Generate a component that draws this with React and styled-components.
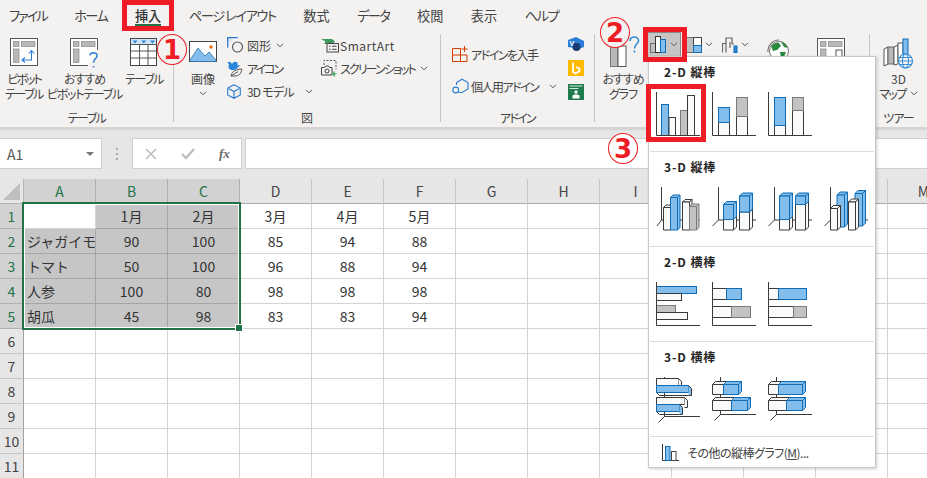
import React from "react";
import styled, { createGlobalStyle } from "styled-components";

const JP = `"Noto Sans CJK JP", "Noto Sans", sans-serif`;
const RED = "#ee1c25";
const BLUE = "#83bdeb";
const BLUE_LINE = "#0f6cb5";
const WHITE = "#fafafa";
const DARK = "#3a3a3a";
const GREY = "#c4c3c1";
const GREY_LINE = "#7a7a7a";

const Global = createGlobalStyle`
  html, body { margin: 0; padding: 0; background: #fff; }
  * { box-sizing: border-box; }
`;

const Page = styled.div`
  position: relative;
  width: 927px;
  height: 478px;
  overflow: hidden;
  background: #fff;
  font-family: ${JP};
  font-feature-settings: "palt";
  color: #444;
`;

/* ---------- tabs ---------- */
const TabBar = styled.div`
  display: flex;
  gap: 27.5px;
  height: 33px;
  padding: 0 0 0 9px;
  background: #f3f2f1;
`;
const Tab = styled.div`
  position: relative;
  height: 33px;
  line-height: 31px;
  font-size: 13.2px;
  letter-spacing: ${(p) => p.$ls || 0}px;
  white-space: nowrap;
  color: #444;
  ${(p) => p.$active && `
    font-weight: 500;
    color: #333;
    &::after {
      content: "";
      position: absolute;
      left: 0; right: 0; top: 24px;
      height: 2px;
      background: #217346;
    }
  `}
`;

/* ---------- ribbon ---------- */
const Ribbon = styled.div`
  display: flex;
  height: 97px;
  background: #f3f2f1;
  border-bottom: 3px solid #d6d4d2;
  font-size: 12px;
  line-height: 15px;
  letter-spacing: -1.5px;
`;
const Group = styled.div`
  display: flex;
  flex-direction: column;
  flex: none;
  width: ${(p) => p.$w}px;
  height: 94px;
`;
const GroupBody = styled.div`
  display: flex;
  flex: 1;
  min-height: 0;
`;
const GroupLabel = styled.div`
  height: 17px;
  line-height: 16px;
  padding-bottom: 1px;
  text-align: center;
  white-space: nowrap;
  ${(p) => p.$ls !== undefined && `letter-spacing: ${p.$ls}px;`}
`;
const Sep = styled.div`
  flex: none;
  width: 1px;
  height: 88px;
  margin-top: 1px;
  background: #c8c6c4;
`;
const Large = styled.div`
  display: flex;
  flex-direction: column;
  align-items: center;
  flex: none;
  width: ${(p) => p.$w}px;
  margin-left: ${(p) => p.$ml || 0}px;
  white-space: nowrap;
`;
const LargeIcon = styled.div`
  display: flex;
  align-items: flex-start;
  justify-content: center;
  flex: none;
  height: 38px;
  padding-top: ${(p) => p.$pt ?? 5}px;
`;
const Line = styled.div`
  height: 15px;
  display: flex;
  align-items: center;
  gap: 4px;
  white-space: nowrap;
  ${(p) => p.$ls !== undefined && `letter-spacing: ${p.$ls}px;`}
`;
const SmallCol = styled.div`
  display: flex;
  flex-direction: column;
  flex: none;
  padding-top: ${(p) => p.$pt ?? 1}px;
  margin-left: ${(p) => p.$ml || 0}px;
  width: ${(p) => p.$w}px;
`;
const SmallRow = styled.div`
  display: flex;
  align-items: center;
  height: ${(p) => p.$h || 23}px;
  white-space: nowrap;
  ${(p) => p.$ls !== undefined && `letter-spacing: ${p.$ls}px;`}
`;
const SmallIcon = styled.div`
  display: flex;
  flex: none;
  width: ${(p) => p.$w || 20}px;
`;
const Chev = styled.svg`
  flex: none;
  margin-left: ${(p) => p.$ml ?? 5}px;
`;
const IconStack = styled.div`
  display: flex;
  flex-direction: column;
  flex: none;
  gap: 8px;
  padding-top: 4px;
  margin-left: ${(p) => p.$ml || 0}px;
`;
const SplitBtn = styled.div`
  display: flex;
  align-items: center;
  flex: none;
  height: 25px;
  margin-top: -1px;
  margin-left: ${(p) => p.$ml || 0}px;
  padding-left: ${(p) => p.$pl || 0}px;
  width: ${(p) => p.$w}px;
  ${(p) => p.$on && `background: #c8c6c4; border: 1px solid #8a8886;`}
`;
const Plain = styled.div`
  flex: none;
  margin-left: ${(p) => p.$ml || 0}px;
  padding-top: 5px;
`;

/* ---------- formula bar ---------- */
const FormulaBar = styled.div`
  display: flex;
  align-items: flex-start;
  height: 49px;
  padding-top: 8px;
  background: #e6e6e6;
`;
const NameBox = styled.div`
  display: flex;
  align-items: center;
  justify-content: space-between;
  flex: none;
  width: 102px;
  height: 31px;
  padding: 0 7px;
  background: #fff;
  border: 1px solid #d0d0d0;
  border-left: 0;
  font-size: 14px;
  color: #555;
`;
const Caret = styled.div`
  width: 0;
  height: 0;
  border-left: 4px solid transparent;
  border-right: 4px solid transparent;
  border-top: 4px solid #777;
`;
const Dots = styled.div`
  flex: none;
  display: flex;
  flex-direction: column;
  gap: 3px;
  width: 30px;
  height: 31px;
  align-items: center;
  justify-content: center;
  & > i { display: block; width: 2px; height: 2px; background: #aaa; }
`;
const FxBox = styled.div`
  display: flex;
  align-items: center;
  flex: none;
  width: 110px;
  height: 31px;
  padding-left: 12px;
  gap: 24px;
  background: #fff;
  border: 1px solid #d0d0d0;
`;
const Fx = styled.span`
  font: italic bold 13px "Liberation Serif", serif;
  color: #666;
`;
const FormulaInput = styled.div`
  flex: 1;
  height: 31px;
  margin-left: 3px;
  background: #fff;
  border: 1px solid #d0d0d0;
  border-right: 0;
`;

/* ---------- sheet ---------- */
const SheetWrap = styled.div`
  position: relative;
`;
const Sheet = styled.div`
  display: grid;
  grid-template-columns: 24px repeat(13, 72px);
  grid-auto-rows: 25px;
  font-size: 14px;
  color: #333;
  font-feature-settings: normal;
`;
const Corner = styled.div`
  position: relative;
  background: #e6e6e6;
  border-right: 1px solid #b5b5b5;
  border-bottom: 1px solid #b5b5b5;
  &::after {
    content: "";
    position: absolute;
    right: 3px;
    bottom: 3px;
    width: 0; height: 0;
    border-left: 17px solid transparent;
    border-bottom: 17px solid #bfbfbf;
  }
`;
const ColHead = styled.div`
  display: flex;
  align-items: center;
  justify-content: center;
  background: ${(p) => (p.$sel ? "#d2d2d2" : "#e6e6e6")};
  color: ${(p) => (p.$sel ? "#217346" : "#444")};
  border-right: 1px solid ${(p) => (p.$sel ? "#b0b0b0" : "#c6c6c6")};
  border-bottom: 1px solid #ababab;
`;
const RowHead = styled.div`
  display: flex;
  align-items: center;
  justify-content: center;
  background: ${(p) => (p.$sel ? "#d2d2d2" : "#e6e6e6")};
  color: ${(p) => (p.$sel ? "#217346" : "#444")};
  border-right: 1px solid #9f9f9f;
  border-bottom: 1px solid ${(p) => (p.$sel ? "#b0b0b0" : "#c6c6c6")};
`;
const Cell = styled.div`
  display: flex;
  align-items: center;
  justify-content: ${(p) => (p.$left ? "flex-start" : "center")};
  overflow: hidden;
  white-space: nowrap;
  padding-left: ${(p) => (p.$left ? 3 : 0)}px;
  background: ${(p) => (p.$sel ? "#c6c6c6" : "#fff")};
  border-right: 1px solid ${(p) => (p.$sel ? "#a6a6a6" : "#d4d4d4")};
  border-bottom: 1px solid ${(p) => (p.$sel ? "#a6a6a6" : "#d4d4d4")};
`;
const Selection = styled.div`
  position: absolute;
  left: 22px;
  top: 23px;
  width: 219px;
  height: 128px;
  border: 2px solid #217346;
  box-shadow: inset 0 0 0 1px #fff;
  pointer-events: none;
`;
const Handle = styled.div`
  position: absolute;
  right: -3px;
  bottom: -3px;
  width: 6px;
  height: 6px;
  background: #217346;
  outline: 1px solid #fff;
`;

/* ---------- chart menu ---------- */
const Menu = styled.div`
  position: absolute;
  left: 648px;
  top: 56px;
  width: 228px;
  height: 412px;
  background: #fff;
  border: 1px solid #c8c8c8;
  box-shadow: 1px 1px 3px rgba(0, 0, 0, 0.2);
`;
const Section = styled.div`
  height: 95px;
  margin: 0 1px;
  padding: 6px 0 0 6px;
  border-bottom: 1px solid #dcdcdc;
`;
const SectionTitle = styled.div`
  height: 18px;
  line-height: 18px;
  padding-left: 8px;
  margin-bottom: 9px;
  font-size: 12px;
  font-weight: 700;
  letter-spacing: 0.9px;
  color: #262626;
`;
const Thumbs = styled.div`
  display: flex;
  gap: 12px;
`;
const MenuFooter = styled.div`
  display: flex;
  align-items: center;
  height: 30px;
  padding-left: 13px;
  font-size: 12px;
  letter-spacing: -0.5px;
  color: #444;
  gap: 8px;
`;

/* ---------- annotations ---------- */
const RedFrame = styled.div`
  position: absolute;
  left: ${(p) => p.$x}px;
  top: ${(p) => p.$y}px;
  width: ${(p) => p.$w}px;
  height: ${(p) => p.$h}px;
  border: 5px solid ${RED};
  pointer-events: none;
`;
const Badge = styled.div`
  position: absolute;
  left: ${(p) => p.$x - 15}px;
  top: ${(p) => p.$y - 15}px;
  width: 30px;
  height: 31px;
  display: flex;
  align-items: center;
  justify-content: center;
  border: 1px solid ${RED};
  border-radius: 50%;
  background: ${(p) => p.$bg};
  color: ${RED};
  font: 700 26px/1 "DejaVu Sans", sans-serif;
`;

/* ---------- drawings ---------- */
const Chevron = ({ ml }) => (
  <Chev $ml={ml} width="8" height="5" viewBox="0 0 8 5">
    <path d="M1 .8 4 3.8 7 .8" fill="none" stroke="#555" strokeWidth="1" />
  </Chev>
);

const Rect = ({ x, y, w, h, kind }) => {
  const k = { b: [BLUE, BLUE_LINE], w: [WHITE, DARK], g: [GREY, GREY_LINE], s: [WHITE, GREY_LINE] }[kind];
  return <rect x={x} y={y} width={w} height={h} fill={k[0]} stroke={k[1]} strokeWidth="1" />;
};
const Box3 = ({ x, y, w, h, kind, d = 3 }) => {
  const k = { b: [BLUE, BLUE_LINE], w: [WHITE, DARK], g: [GREY, GREY_LINE] }[kind];
  return (
    <g fill={k[0]} stroke={k[1]} strokeWidth="1" strokeLinejoin="round">
      <path d={`M${x} ${y} l${d} ${-d} h${w} l${-d} ${d} z`} />
      <path d={`M${x + w} ${y} l${d} ${-d} v${h} l${-d} ${d} z`} />
      <rect x={x} y={y} width={w} height={h} />
    </g>
  );
};
const Axis2 = () => <path d="M.5 2V45.5H44" fill="none" stroke={DARK} strokeWidth="1" />;
const Axis3 = ({ x = 5.5, floor = 35, tail = 1 }) => (
  <path d={`M${x} 2V${floor}H44M${x} ${floor}L${tail} ${floor + 6}`} fill="none" stroke={DARK} strokeWidth="1" />
);
const AxisH3 = ({ x = 8.5, floor = 39.5, top = 2 }) => (
  <path d={`M${x} ${top}V${floor}H44M${x} ${floor}L${x - 6} ${floor + 6}`} fill="none" stroke={DARK} strokeWidth="1" />
);
const Thumb = ({ children }) => (
  <svg width="44" height="48" viewBox="0 0 44 48">{children}</svg>
);

const col2 = [
  <Thumb key="a"><Rect x={5.5} y={14.5} w={7} h={31} kind="b" /><Rect x={13} y={27.5} w={6.5} h={18} kind="w" /><Rect x={24.5} y={20.5} w={7} h={25} kind="g" /><Rect x={31.5} y={5.5} w={7} h={40} kind="w" /><Axis2 /></Thumb>,
  <Thumb key="b"><Rect x={6.5} y={32.5} w={11} h={13} kind="w" /><Rect x={6.5} y={17.5} w={11} h={15} kind="b" /><Rect x={24.5} y={26.5} w={11} h={19} kind="w" /><Rect x={24.5} y={7.5} w={11} h={19} kind="g" /><Axis2 /></Thumb>,
  <Thumb key="c"><Rect x={6.5} y={35.5} w={11} h={10} kind="w" /><Rect x={6.5} y={7.5} w={11} h={28} kind="b" /><Rect x={24.5} y={20.5} w={11} h={25} kind="w" /><Rect x={24.5} y={7.5} w={11} h={13} kind="g" /><Axis2 /></Thumb>,
];
const col3 = [
  <Thumb key="a"><Axis3 /><Box3 x={7.5} y={22.5} w={7} h={22.5} kind="w" d={2.5} /><Box3 x={14.5} y={12.5} w={7} h={32.5} kind="b" d={2.5} /><Box3 x={26.5} y={17} w={7} h={28} kind="w" d={2.5} /><Box3 x={33.5} y={21.5} w={7} h={23.5} kind="g" d={2.5} /></Thumb>,
  <Thumb key="b"><Axis3 x={6.5} tail={.5} /><Box3 x={11.5} y={34.5} w={10} h={10.5} kind="w" /><Box3 x={11.5} y={19.5} w={10} h={15} kind="b" /><Box3 x={27.5} y={27} w={10} h={18} kind="w" /><Box3 x={27.5} y={11} w={10} h={16} kind="b" /></Thumb>,
  <Thumb key="c"><Axis3 x={6.5} tail={.5} /><Box3 x={11.5} y={34.5} w={10} h={10.5} kind="w" /><Box3 x={11.5} y={11} w={10} h={23.5} kind="b" /><Box3 x={27.5} y={19.5} w={10} h={25.5} kind="w" /><Box3 x={27.5} y={11} w={10} h={8.5} kind="b" /></Thumb>,
  <Thumb key="d"><Axis3 x={6.5} tail={.5} /><Box3 x={13} y={10} w={7.5} h={32} kind="b" /><Box3 x={31} y={8.5} w={7.5} h={32.5} kind="b" /><Box3 x={6.5} y={23.5} w={7} h={21.5} kind="w" /><Box3 x={24.5} y={17} w={7} h={28} kind="w" /></Thumb>,
];
const bar2 = [
  <Thumb key="a"><Rect x={.5} y={6.5} w={40} h={7} kind="b" /><Rect x={.5} y={13.5} w={25} h={7} kind="w" /><Rect x={.5} y={25.5} w={19} h={7} kind="g" /><Rect x={.5} y={32.5} w={31} h={7} kind="w" /><Axis2 /></Thumb>,
  <Thumb key="b"><Rect x={.5} y={8.5} w={14} h={11} kind="w" /><Rect x={14.5} y={8.5} w={15} h={11} kind="b" /><Rect x={.5} y={26.5} w={19} h={11} kind="w" /><Rect x={19.5} y={26.5} w={19} h={11} kind="g" /><Axis2 /></Thumb>,
  <Thumb key="c"><Rect x={.5} y={8.5} w={10} h={11} kind="w" /><Rect x={10.5} y={8.5} w={28} h={11} kind="b" /><Rect x={.5} y={26.5} w={25} h={11} kind="w" /><Rect x={25.5} y={26.5} w={13} h={11} kind="g" /><Axis2 /></Thumb>,
];
const bar3 = [
  <Thumb key="a"><AxisH3 top={2} floor={41.5} /><Box3 x={.5} y={3.5} w={22} h={7} kind="w" d={0} /><path d="M22.5 3.5l3 3v7h-3" fill={WHITE} stroke={DARK} /><Box3 x={.5} y={10.5} w={32} h={7} kind="b" d={0} /><path d="M32.5 10.5l3 3v7h-3" fill={BLUE} stroke={DARK} /><path d="M.5 17.5l3 3h29" fill="none" stroke={DARK} /><Box3 x={.5} y={22.5} w={28} h={7} kind="w" d={0} /><path d="M28.5 22.5l3 3v7h-3" fill={WHITE} stroke={DARK} /><Box3 x={.5} y={29.5} w={23} h={7} kind="b" d={0} /><path d="M23.5 29.5l3 3v7h-3" fill={BLUE} stroke={DARK} /><path d="M.5 36.5l3 3h20" fill="none" stroke={DARK} /></Thumb>,
  <Thumb key="b"><AxisH3 top={2} /><Box3 x={.5} y={9.5} w={11} h={10} kind="w" /><Box3 x={11.5} y={9.5} w={15} h={10} kind="b" /><Box3 x={.5} y={25.5} w={19} h={10} kind="w" /><Box3 x={19.5} y={25.5} w={16} h={10} kind="b" /></Thumb>,
  <Thumb key="c"><AxisH3 top={2} /><Box3 x={.5} y={9.5} w={10} h={10} kind="w" /><Box3 x={10.5} y={9.5} w={24} h={10} kind="b" /><Box3 x={.5} y={25.5} w={18} h={10} kind="w" /><Box3 x={18.5} y={25.5} w={16} h={10} kind="b" /></Thumb>,
];

const PivotIcon = () => (
  <svg width="28" height="28" viewBox="0 0 28 28">
    <rect x=".5" y=".5" width="27" height="27" fill="#fff" stroke="#555" />
    <rect x="3.5" y="3.5" width="5.5" height="5" fill="#b9b8b6" stroke="#7a7a7a" strokeWidth=".6" />
    <rect x="11.5" y="3.5" width="13.5" height="5" fill="#b9b8b6" stroke="#7a7a7a" strokeWidth=".6" />
    <rect x="3.5" y="11" width="5.5" height="13.5" fill="#b9b8b6" stroke="#7a7a7a" strokeWidth=".6" />
    <path d="M13 22h8.5v-9M18.8 15.5l2.7-3 2.7 3M15 19.5l-3 2.5 3 2.5" fill="none" stroke="#2b7cd3" strokeWidth="1.1" />
  </svg>
);
const RecoPivotIcon = () => (
  <svg width="30" height="30" viewBox="0 0 30 30">
    <path d="M18 27.5H.5V.5h27V12" fill="#fff" stroke="#555" />
    <rect x="3.5" y="3.5" width="5.5" height="5" fill="#b9b8b6" stroke="#7a7a7a" strokeWidth=".6" />
    <rect x="11.5" y="3.5" width="13.5" height="5" fill="#b9b8b6" stroke="#7a7a7a" strokeWidth=".6" />
    <rect x="3.5" y="11" width="5.5" height="13.5" fill="#b9b8b6" stroke="#7a7a7a" strokeWidth=".6" />
    <path d="M20 17.5c0-3.5 7-4 7 .3 0 3-3.5 3-3.5 7M23.5 28v1.6" fill="none" stroke="#2b7cd3" strokeWidth="1.5" />
  </svg>
);
const TableIcon = () => (
  <svg width="28" height="28" viewBox="0 0 28 28">
    <rect x=".5" y=".5" width="26" height="27" fill="#fff" stroke="#444" />
    <rect x="1" y="1" width="25" height="5.5" fill="#cfe4f6" />
    <path d="M.5 6.5h26M.5 13h26M.5 20h26M9.5 6.5v21M18 6.5v21" stroke="#555" fill="none" />
    <path d="M2.5 2.5h5l-2.5 3zM11.3 2.5h5l-2.5 3zM20 2.5h5l-2.5 3z" fill="#2b88d8" />
  </svg>
);
const PictureIcon = () => (
  <svg width="28" height="21" viewBox="0 0 28 21">
    <rect x=".5" y=".5" width="27" height="20" fill="#fff" stroke="#444" />
    <path d="M1 19 9 7l7 8 4-4 7 8v1.5H1z" fill={BLUE} stroke="#2f6ea3" strokeWidth=".8" />
    <circle cx="22" cy="6" r="1.8" fill="#e8700f" />
  </svg>
);
const ShapesIcon = () => (
  <svg width="17" height="17" viewBox="0 0 17 17">
    <path d="M.7 10.5V.7h10" fill="none" stroke="#2b7cd3" strokeWidth="1.3" />
    <rect x=".7" y=".7" width="4" height="4" fill="#2b7cd3" opacity=".12" />
    <circle cx="10.5" cy="10" r="5" fill="#f3f2f1" stroke="#555" strokeWidth="1.1" />
  </svg>
);
const BirdIcon = () => (
  <svg width="16" height="16" viewBox="0 0 16 16">
    <path d="M.5 1h3l1.5 2C6 1 8 .3 9.5 1c1.2.6 1.5 2 .8 3.3H13L10 7.5C8 9.2 5 9.5 3 8.5 1.5 7.5 1 5.5 2 3.8z" fill="#2b88d8" />
    <path d="M4 15c.5-3.5 3-6.5 10.8-7-.3 4.5-3 7-7 7-1 0-2.3-.2-3.8 0zM4.2 15 11 10.5" fill="#f3f2f1" stroke="#555" strokeWidth="1" />
  </svg>
);
const CubeIcon = () => (
  <svg width="14" height="15" viewBox="0 0 14 15">
    <path d="M7 .7 13.3 4v7L7 14.3.7 11V4zM.7 4 7 7.5 13.3 4M7 7.5v6.8" fill="none" stroke="#2b7cd3" strokeWidth="1.1" />
  </svg>
);
const SmartArtIcon = () => (
  <svg width="18" height="14" viewBox="0 0 18 14">
    <path d="M0 0h11l3 2.5-3 2.5H3L4.5 2.5z" fill="#3f9a5d" />
    <rect x="6" y="4.5" width="11.5" height="8.5" fill="#f3f2f1" stroke="#444" />
    <path d="M8 7.2h1.5M11 7.2h4.5M8 10.3h1.5M11 10.3h4.5" stroke="#444" />
  </svg>
);
const ScreenshotIcon = () => (
  <svg width="16" height="17" viewBox="0 0 16 17">
    <path d="M3 5V.5h12v9" fill="none" stroke="#555" strokeDasharray="2 1.5" />
    <path d="M.5 7.5h3l1-1.5h3l1 1.5h2.5V15H.5z" fill="#f3f2f1" stroke="#444" />
    <circle cx="6" cy="11" r="2" fill="none" stroke="#444" />
    <path d="M13 11.5v5M10.5 14h5" stroke="#2f9a4f" strokeWidth="1.2" />
  </svg>
);
const GetAddinIcon = () => (
  <svg width="16" height="16" viewBox="0 0 16 16">
    <path d="M.5 2.5h8v13H.5zM.5 9H15v6.5H8.5M8.5 9V2.5" fill="none" stroke="#d83b01" strokeWidth="1" />
    <path d="M12.5 0v6M9.5 3h6" stroke="#d83b01" strokeWidth="1" />
  </svg>
);
const MyAddinIcon = () => (
  <svg width="17" height="17" viewBox="0 0 17 17">
    <path d="M4.5 7V4.5L10 1.2l6 3.3V11L10 14.5H6.5" fill="none" stroke="#2b7cd3" strokeWidth="1.1" />
    <circle cx="3.7" cy="12" r="2.9" fill="#f3f2f1" stroke="#2b7cd3" strokeWidth="1.1" />
  </svg>
);
const VisioIcon = () => (
  <svg width="16" height="15" viewBox="0 0 16 15">
    <path d="M8 0l8 4v6l-5 2-3-1-8-1V3z" fill="#2b7cd3" />
    <circle cx="8.5" cy="10" r="4" fill="#173a73" />
    <text x="1.5" y="8.5" fontSize="7" fontWeight="700" fill="#fff" fontFamily="Liberation Sans, sans-serif">V</text>
  </svg>
);
const BingIcon = () => (
  <svg width="16" height="16" viewBox="0 0 16 16">
    <rect width="16" height="16" fill="#ffb900" />
    <path d="M5 2.5V12l2.5 1.5 4-2.5V8.5L8 7" fill="none" stroke="#fff" strokeWidth="1.8" />
  </svg>
);
const PeopleIcon = () => (
  <svg width="16" height="16" viewBox="0 0 16 16">
    <rect width="16" height="16" fill="#1f7a4d" />
    <path d="M1.5 2h13M1.5 4.5h9" stroke="#cfe8d8" strokeWidth="1.2" />
    <circle cx="8" cy="8" r="1.7" fill="#fff" />
    <path d="M4.5 14.5v-3l2-1h3l2 1v3z" fill="#fff" />
  </svg>
);
const RecoChartIcon = () => (
  <svg width="34" height="32" viewBox="-4 0 34 32">
    <rect x=".5" y="3.5" width="7.5" height="28" fill="#b9b8b6" stroke="#7a7a7a" />
    <rect x="8" y="11" width="8" height="20.5" fill="#fff" stroke="#555" />
    <path d="M20 6c0-5 8.5-5.5 8.5-.5 0 3.5-4 3.5-4 8M24.5 15.5v2" fill="none" stroke="#2b88d8" strokeWidth="1.5" />
  </svg>
);
const ColumnIcon = () => (
  <svg width="17" height="17" viewBox="0 0 17 17">
    <rect x=".5" y="7.5" width="5" height="9" fill="#c0bfbd" stroke="#6f6f6f" />
    <rect x="5.5" y=".5" width="5" height="16" fill="#fff" stroke="#333" />
    <rect x="10.5" y="3.5" width="5" height="13" fill={BLUE} stroke={BLUE_LINE} />
  </svg>
);
const HierarchyIcon = () => (
  <svg width="16" height="16" viewBox="0 0 16 16">
    <rect x=".5" y=".5" width="7" height="15" fill="#c0bfbd" stroke="#6f6f6f" />
    <rect x="7.5" y=".5" width="8" height="8" fill="#fff" stroke="#444" />
    <rect x="7.5" y="8.5" width="8" height="7" fill={BLUE} stroke={BLUE_LINE} />
  </svg>
);
const WaterfallIcon = () => (
  <svg width="16" height="16" viewBox="0 0 16 16">
    <path d="M.5 15.5v-9H4V1h6v6h2" fill="none" stroke="#666" strokeWidth="1.2" />
    <path d="M4 15.5v-9M8 5v6" fill="none" stroke="#666" strokeWidth="1.2" />
    <rect x="12" y="9" width="3" height="6.5" fill="#2b88d8" stroke={BLUE_LINE} />
  </svg>
);
const GlobeIcon = () => (
  <svg width="24" height="26" viewBox="0 0 24 26">
    <path d="M2 14a11 11 0 0 1 11-12" fill="none" stroke="#777" strokeWidth="1.2" />
    <circle cx="13" cy="13" r="9.5" fill="#fff" stroke="#777" />
    <path d="M5 8c3-3 6-4 8-3l2 3-4 4-4 1zM15 4c3 0 6 3 6.5 6L18 9zM14 14h6l-2 5-3 1z" fill="#2c8a3f" />
  </svg>
);
const PivotChartIcon = () => (
  <svg width="29" height="28" viewBox="0 0 29 28">
    <rect x=".5" y=".5" width="27" height="27" fill="#fff" stroke="#555" />
    <rect x="3.5" y="3.5" width="5.5" height="5" fill="#b9b8b6" stroke="#7a7a7a" strokeWidth=".6" />
    <rect x="11.5" y="3.5" width="13.5" height="5" fill="#b9b8b6" stroke="#7a7a7a" strokeWidth=".6" />
    <rect x="3.5" y="11" width="5.5" height="13" fill="#b9b8b6" stroke="#7a7a7a" strokeWidth=".6" />
    <rect x="19" y="12" width="6" height="10" fill="#fff" stroke="#555" />
  </svg>
);
const MapIcon = () => (
  <svg width="31" height="31" viewBox="0 0 31 31">
    <path d="M1 11l4-2v17l-4 2z" fill="#fff" stroke="#555" />
    <rect x="5" y="9" width="6" height="17" fill="#b9b8b6" stroke="#666" />
    <path d="M11 9l4-2v19l-4 1z" fill="#fff" stroke="#555" />
    <rect x="15" y="5" width="5" height="18" fill="#fff" stroke="#555" />
    <rect x="20" y="1" width="5" height="18" fill={BLUE} stroke={BLUE_LINE} />
    <circle cx="22.5" cy="23" r="7" fill="#f3f2f1" stroke="#2b88d8" strokeWidth="1.1" />
    <ellipse cx="22.5" cy="23" rx="3" ry="7" fill="none" stroke="#2b88d8" />
    <path d="M15.5 23h14M16.5 19.5h12M16.5 26.5h12" stroke="#2b88d8" strokeWidth=".9" />
  </svg>
);
const MoreIcon = () => (
  <svg width="17" height="17" viewBox="0 0 17 17">
    <path d="M.5 0v16.5H17" fill="none" stroke="#333" />
    <rect x="3.5" y="2.5" width="4.5" height="14" fill={BLUE} stroke={BLUE_LINE} />
    <rect x="9.5" y="7.5" width="4.5" height="9" fill="#fff" stroke="#444" />
  </svg>
);
const CrossIcon = () => (
  <svg width="12" height="12" viewBox="0 0 12 12"><path d="M1 1l10 10M11 1 1 11" stroke="#bdbdbd" strokeWidth="1.5" fill="none" /></svg>
);
const CheckIcon = () => (
  <svg width="14" height="12" viewBox="0 0 14 12"><path d="M1 6l4 4 8-9" stroke="#bdbdbd" strokeWidth="2.3" fill="none" /></svg>
);

/* ---------- data ---------- */
const COLS = ["A", "B", "C", "D", "E", "F", "G", "H", "I", "J", "K", "L", "M"];
const DATA = [
  ["", "1月", "2月", "3月", "4月", "5月"],
  ["ジャガイモ", "90", "100", "85", "94", "88"],
  ["トマト", "50", "100", "96", "88", "94"],
  ["人参", "100", "80", "98", "98", "98"],
  ["胡瓜", "45", "98", "83", "83", "94"],
];
const ROWS = Array.from({ length: 11 }, (_, i) => i);

export default function App() {
  return (
    <Page>
      <Global />
      <TabBar>
        <Tab $ls={-2}>ファイル</Tab>
        <Tab $ls={-1.5}>ホーム</Tab>
        <Tab $active>挿入</Tab>
        <Tab $ls={-1.4}>ページ レイアウト</Tab>
        <Tab>数式</Tab>
        <Tab $ls={-1.5}>データ</Tab>
        <Tab>校閲</Tab>
        <Tab>表示</Tab>
        <Tab $ls={-1.5}>ヘルプ</Tab>
      </TabBar>

      <Ribbon>
        <Group $w={173}>
          <GroupBody>
            <Large $w={48}>
              <LargeIcon><PivotIcon /></LargeIcon>
              <Line $ls={-2}>ピボット</Line>
              <Line>テーブル</Line>
            </Large>
            <Large $w={73}>
              <LargeIcon><RecoPivotIcon /></LargeIcon>
              <Line $ls={-1}>おすすめ</Line>
              <Line $ls={-1.25}>ピボットテーブル</Line>
            </Large>
            <Large $w={46}>
              <LargeIcon><TableIcon /></LargeIcon>
              <Line>テーブル</Line>
            </Large>
          </GroupBody>
          <GroupLabel>テーブル</GroupLabel>
        </Group>
        <Sep />
        <Group $w={266}>
          <GroupBody>
            <Large $w={44} $ml={7}>
              <LargeIcon $pt={8}><PictureIcon /></LargeIcon>
              <Line $ls={0}>画像</Line>
              <Line><Chevron ml={0} /></Line>
            </Large>
            <SmallCol $w={94} $ml={2}>
              <SmallRow $ls={0}><SmallIcon><ShapesIcon /></SmallIcon>図形<Chevron /></SmallRow>
              <SmallRow $ls={-2}><SmallIcon><BirdIcon /></SmallIcon>アイコン</SmallRow>
              <SmallRow $ls={-0.8}><SmallIcon><CubeIcon /></SmallIcon>3D モデル<Chevron ml={11} /></SmallRow>
            </SmallCol>
            <SmallCol $w={110}>
              <SmallRow $ls={0.5}><SmallIcon $w={19}><SmartArtIcon /></SmallIcon>SmartArt</SmallRow>
              <SmallRow $ls={-1.9}><SmallIcon $w={19}><ScreenshotIcon /></SmallIcon>スクリーンショット<Chevron /></SmallRow>
            </SmallCol>
          </GroupBody>
          <GroupLabel $ls={0}>図</GroupLabel>
        </Group>
        <Sep />
        <Group $w={153}>
          <GroupBody>
            <SmallCol $w={116} $ml={11} $pt={5}>
              <SmallRow $h={32}><SmallIcon $w={19}><GetAddinIcon /></SmallIcon>アドインを入手</SmallRow>
              <SmallRow $h={32}><SmallIcon $w={19}><MyAddinIcon /></SmallIcon>個人用アドイン<Chevron ml={11} /></SmallRow>
            </SmallCol>
            <IconStack>
              <VisioIcon />
              <BingIcon />
              <PeopleIcon />
            </IconStack>
          </GroupBody>
          <GroupLabel $ls={-1.75}>アドイン</GroupLabel>
        </Group>
        <Sep />
        <Group $w={274}>
          <GroupBody>
            <Large $w={38} $ml={9}>
              <LargeIcon $pt={2}><RecoChartIcon /></LargeIcon>
              <Line $ls={-1}>おすすめ</Line>
              <Line $ls={-1}>グラフ</Line>
            </Large>
            <SplitBtn $on $ml={5} $w={34} $pl={2}><ColumnIcon /><Chevron ml={3} /></SplitBtn>
            <SplitBtn $ml={5} $w={30}><HierarchyIcon /><Chevron ml={3} /></SplitBtn>
            <SplitBtn $ml={6} $w={32}><WaterfallIcon /><Chevron ml={3} /></SplitBtn>
            <Plain $ml={12}><GlobeIcon /></Plain>
            <Plain $ml={27}><PivotChartIcon /></Plain>
          </GroupBody>
          <GroupLabel />
        </Group>
        <Sep />
        <Group $w={57}>
          <GroupBody>
            <Large $w={57}>
              <LargeIcon><MapIcon /></LargeIcon>
              <Line $ls={0}>3D</Line>
              <Line>マップ<Chevron ml={0} /></Line>
            </Large>
          </GroupBody>
          <GroupLabel $ls={-1}>ツアー</GroupLabel>
        </Group>
      </Ribbon>

      <FormulaBar>
        <NameBox>A1<Caret /></NameBox>
        <Dots><i /><i /><i /></Dots>
        <FxBox><CrossIcon /><CheckIcon /><Fx>fx</Fx></FxBox>
        <FormulaInput />
      </FormulaBar>

      <SheetWrap>
        <Sheet>
          <Corner />
          {COLS.map((c, i) => (
            <ColHead key={c} $sel={i < 3}>{c}</ColHead>
          ))}
          {ROWS.map((r) => (
            <React.Fragment key={r}>
              <RowHead $sel={r < 5}>{r + 1}</RowHead>
              {COLS.map((c, ci) => {
                const text = DATA[r] ? DATA[r][ci] : "";
                const sel = r < 5 && ci < 3 && !(r === 0 && ci === 0);
                return (
                  <Cell key={c} $sel={sel} $left={ci === 0}>{text}</Cell>
                );
              })}
            </React.Fragment>
          ))}
        </Sheet>
        <Selection><Handle /></Selection>
      </SheetWrap>

      <Menu>
        <Section>
          <SectionTitle>2-D 縦棒</SectionTitle>
          <Thumbs>{col2}</Thumbs>
        </Section>
        <Section>
          <SectionTitle>3-D 縦棒</SectionTitle>
          <Thumbs>{col3}</Thumbs>
        </Section>
        <Section>
          <SectionTitle>2-D 横棒</SectionTitle>
          <Thumbs>{bar2}</Thumbs>
        </Section>
        <Section>
          <SectionTitle>3-D 横棒</SectionTitle>
          <Thumbs>{bar3}</Thumbs>
        </Section>
        <MenuFooter>
          <MoreIcon />
          <span>その他の縦棒グラフ(<u>M</u>)...</span>
        </MenuFooter>
      </Menu>

      <RedFrame $x={122} $y={0} $w={52} $h={31} />
      <RedFrame $x={643} $y={27} $w={44} $h={35} />
      <RedFrame $x={646} $y={84} $w={60} $h={58} />
      <Badge $x={172} $y={49} $bg="#f3f2f1">1</Badge>
      <Badge $x={615} $y={32} $bg="#f3f2f1">2</Badge>
      <Badge $x={623} $y={148} $bg="#fff">3</Badge>
    </Page>
  );
}
